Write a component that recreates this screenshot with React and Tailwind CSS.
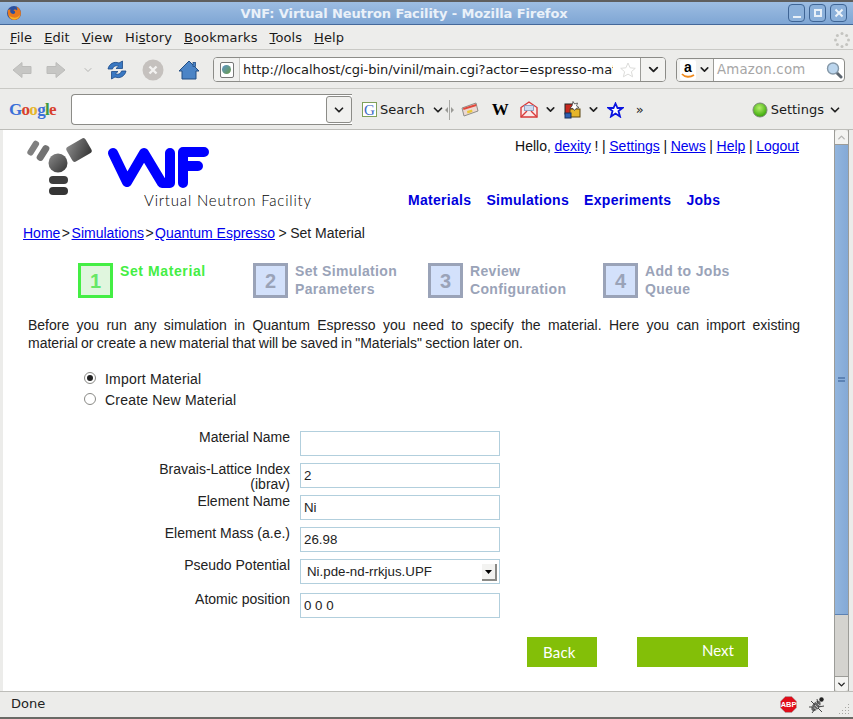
import { ChevronDown } from 'lucide-react';

const ui = { fontFamily: '"DejaVu Sans", sans-serif' };

function FirefoxIcon() {
  return (
    <svg width="16" height="16" viewBox="0 0 16 16">
      <circle cx="8" cy="8" r="7" fill="#2b4f9e" />
      <path d="M2 5C1 9 3 15 8.500 15C13 15 15.500 11 14.800 7C14.300 4 12 2 10 1.500C11.500 3 11.500 4.500 11 5.500C10 4 8 4.500 7.500 5.500C8.500 5.500 9.500 6.500 9 8C8 9.500 5.500 9 4.500 7.500C4 6.500 4 5.500 4.500 4.500C3.500 4.500 2.500 4.500 2 5Z" fill="#e8781e" />
      <path d="M8 14.500C11 14.500 13.500 12.500 14.300 9.500C13 12 10 13 7 12.500C5 12 3.500 11 2.800 10C3.500 12.500 5.500 14.500 8 14.500Z" fill="#f4b62a" />
    </svg>
  );
}

function WindowButton({ children }) {
  return (
    <div className="w-[17px] h-[18px] rounded-[4px] border border-[#3f6595] bg-[#8bb0da] flex items-center justify-center">
      {children}
    </div>
  );
}

function TitleBar() {
  return (
    <div className="h-[25px] shrink-0 relative flex items-center border-t-[2px] border-b border-t-[#5e5e5e] border-b-[#44689a] bg-gradient-to-b from-[#9dbde2] to-[#7fa6d4]" style={ui}>
      <div className="ml-[6px] shrink-0"><FirefoxIcon /></div>
      <div className="flex-1 text-center text-[13px] font-bold text-[#eaf1f9] mt-[1px] -ml-[2px] tracking-[-0.1px]">VNF: Virtual Neutron Facility - Mozilla Firefox</div>
      <div className="flex gap-[4px] mr-[6px]">
        <WindowButton><div className="w-[8px] h-[2px] mt-[7px] bg-[#e8f0f8]" /></WindowButton>
        <WindowButton><div className="w-[8px] h-[8px] border-[2px] border-[#e8f0f8]" /></WindowButton>
        <WindowButton>
          <svg width="10" height="10" viewBox="0 0 10 10"><path d="M1.500 1.500L8.500 8.500M8.500 1.500L1.500 8.500" stroke="#eef4fa" strokeWidth="2" /></svg>
        </WindowButton>
      </div>
    </div>
  );
}

function Throbber() {
  const dots = [[8, 1.500], [12.600, 3.400], [14.500, 8], [12.600, 12.600], [8, 14.500], [3.400, 12.600], [1.500, 8], [3.400, 3.400]];
  return (
    <svg width="16" height="16" viewBox="0 0 16 16">
      {dots.map(([x, y], i) => <circle key={i} cx={x} cy={y} r="1.500" fill="#c4c4c0" />)}
    </svg>
  );
}

function MenuBar() {
  return (
    <div className="h-[25px] shrink-0 flex items-center bg-[#ededeb] border-b border-[#c9c9c5] text-[13px] text-[#1a1a1a] relative" style={ui}>
      <div className="flex items-center pl-[10px] gap-[12px] pt-[1px] tracking-[0.1px]">
        <span><span className="underline">F</span>ile</span>
        <span><span className="underline">E</span>dit</span>
        <span><span className="underline">V</span>iew</span>
        <span>Hi<span className="underline">s</span>tory</span>
        <span><span className="underline">B</span>ookmarks</span>
        <span><span className="underline">T</span>ools</span>
        <span><span className="underline">H</span>elp</span>
      </div>
      <div className="ml-auto mr-[3px] mt-[6px]"><Throbber /></div>
    </div>
  );
}

function ArrowIcon({ flip }) {
  return (
    <svg width="20" height="20" viewBox="0 0 20 20" className={flip ? 'scale-x-[-1]' : ''}>
      <path d="M1 10L10 2.500V6.500H19V13.500H10V17.500Z" fill="#c6c6c4" stroke="#bcbcba" />
    </svg>
  );
}

function ReloadIcon() {
  return (
    <svg width="20" height="20" viewBox="0 0 20 20">
      <path d="M1 9C2 4 7 1 12 3L15.500 1V8.500H9L11.500 6.200C9 5 6 6.500 5.500 9Z" fill="#3a78c2" stroke="#1c4a88" strokeWidth="0.800" />
      <path d="M19 11C18 16 13 19 8 17L4.500 19V11.500H11L8.500 13.800C11 15 14 13.500 14.500 11Z" fill="#3a78c2" stroke="#1c4a88" strokeWidth="0.800" />
    </svg>
  );
}

function StopIcon() {
  return (
    <svg width="22" height="22" viewBox="0 0 22 22">
      <circle cx="11" cy="11" r="10.500" fill="#c5c1be" />
      <path d="M7.500 7.500L14.500 14.500M14.500 7.500L7.500 14.500" stroke="#f3f2f0" strokeWidth="2.400" />
    </svg>
  );
}

function HomeIcon() {
  return (
    <svg width="22" height="20" viewBox="0 0 22 20">
      <path d="M11 1L21 11H18V19H4V11H1Z" fill="#4b84c6" stroke="#234f85" strokeWidth="1" />
      <rect x="15" y="2.500" width="2.500" height="4" fill="#4b84c6" stroke="#234f85" strokeWidth="0.800" />
    </svg>
  );
}

function NavBar() {
  return (
    <div className="h-[39px] shrink-0 flex items-center bg-[#ececea] border-b border-[#c9c9c5] relative pt-[1px]">
      <div className="ml-[12px]"><ArrowIcon /></div>
      <div className="ml-[14px]"><ArrowIcon flip /></div>
      <ChevronDown size={12} strokeWidth={2} className="ml-[16px] text-[#b4b4b2]" />
      <div className="ml-[13px]"><ReloadIcon /></div>
      <div className="ml-[15px]"><StopIcon /></div>
      <div className="ml-[14px]"><HomeIcon /></div>

      <div className="ml-[13px] w-[453px] h-[25px] bg-white border border-[#8c8c88] rounded-[4px] flex items-center overflow-hidden">
        <div className="w-[26px] h-full shrink-0 flex items-center justify-center bg-[#f1f1ef] border-r border-[#c9c9c5]">
          <div className="w-[14px] h-[16px] bg-white border border-[#777] rounded-[2px] flex items-center justify-center">
            <div className="w-[9px] h-[9px] rounded-full bg-gradient-to-br from-[#5d92c8] to-[#6d9a3d]" />
          </div>
        </div>
        <div className="w-[370px] ml-[3px] text-[13px] text-[#1a1a1a] whitespace-nowrap overflow-hidden shrink-0 tracking-[-0.05px]" style={ui}>
          http://localhost/cgi-bin/vinil/main.cgi?actor=espresso-material
        </div>
        <svg width="16" height="16" viewBox="0 0 16 16" className="ml-[7px] shrink-0">
          <path d="M8 1L10.100 5.800L15.300 6.300L11.400 9.700L12.600 14.800L8 12.100L3.400 14.800L4.600 9.700L.7 6.300L5.900 5.800Z" fill="#fff" stroke="#dcdcda" strokeWidth="1" />
        </svg>
        <div className="ml-auto w-[25px] h-full border-l border-[#9c9c98] bg-[#f3f3f1] flex items-center justify-center shrink-0">
          <ChevronDown size={15} strokeWidth={3} className="text-[#222]" />
        </div>
      </div>

      <div className="ml-[10px] w-[169px] h-[24px] bg-white border border-[#8c8c88] rounded-[4px] flex items-center overflow-hidden">
        <div className="w-[37px] h-full shrink-0 flex items-center bg-[#f1f1ef] border-r border-[#9c9c98] pl-[3px]">
          <div className="w-[16px] h-[20px] bg-white rounded-[2px] flex flex-col items-center leading-[14px] text-[14px] font-bold text-black relative" style={{ fontFamily: '"Liberation Sans", sans-serif' }}>
            a
            <svg width="14" height="6" viewBox="0 0 14 6" className="absolute bottom-[1px] left-[1px]"><path d="M1 1C4 4.500 9 4.500 13 2" stroke="#f08a1d" strokeWidth="1.800" fill="none" /></svg>
          </div>
          <ChevronDown size={13} strokeWidth={3} className="text-[#222] ml-[2px]" />
        </div>
        <span className="ml-[3px] text-[13.300px] text-[#a6a6a6] tracking-[0.2px]" style={ui}>Amazon.com</span>
        <svg width="17" height="18" viewBox="0 0 17 18" className="ml-auto mr-[1px]">
          <path d="M10.500 11.500L15 16" stroke="#5c6670" strokeWidth="3" strokeLinecap="round" />
          <circle cx="7" cy="7.500" r="5.500" fill="#bcd6ee" stroke="#8598a8" strokeWidth="1.400" />
        </svg>
      </div>
    </div>
  );
}

function GoogleBar() {
  return (
    <div className="h-[41px] shrink-0 flex items-center bg-[#ececea] border-b border-[#bdbdb9] text-[13px] text-[#1a1a1a] pt-[1px]" style={ui}>
      <div className="ml-[9px] w-[48px] text-[17px] leading-none tracking-[-0.7px] font-bold" style={{ fontFamily: '"Liberation Serif", serif' }}>
        <span className="text-[#3a6fd8]">G</span><span className="text-[#d8402c]">o</span><span className="text-[#e6b52c]">o</span><span className="text-[#3a6fd8]">g</span><span className="text-[#3f9a3f]">l</span><span className="text-[#d8402c]">e</span>
      </div>
      <div className="ml-[14px] w-[281px] h-[31px] bg-white border border-[#8c8c88] border-r-0 rounded-l-[4px] flex justify-end shrink-0 items-center">
        <div className="w-[26px] h-[27px] bg-[#f1f1ef] border border-[#8c8c88] rounded-[3px] flex items-center justify-center">
          <ChevronDown size={14} strokeWidth={3} className="text-[#222]" />
        </div>
      </div>
      <div className="ml-[10px] w-[15px] h-[15px] border border-[#7fa05a] bg-white text-[15px] leading-[14px] text-center text-[#3d69c8]" style={{ fontFamily: '"Liberation Serif", serif' }}>G</div>
      <span className="ml-[3px]">Search</span>
      <ChevronDown size={14} strokeWidth={3} className="ml-[6px] text-[#222]" />
      <div className="relative w-[8px] h-[20px] ml-[1px] flex items-center justify-center">
        <div className="w-[1px] h-full bg-[#a8a8a4]" />
        <svg width="9" height="6" viewBox="0 0 9 6" className="absolute"><path d="M0 3L3 0V6ZM9 3L6 0V6Z" fill="#9a9a96" /></svg>
      </div>
      <svg width="18" height="16" viewBox="0 0 18 16" className="ml-[7px]">
        <path d="M1 6L15 1L17 9L3 14Z" fill="#ecd8d2" stroke="#8e8e8a" />
        <path d="M2 6L15 2L15.500 4L2.500 8Z" fill="#e0483c" />
        <path d="M6 9L11 7.500L11.500 10L6.500 11.500Z" fill="#e9c83a" />
      </svg>
      <span className="ml-[13px] text-[17px] font-bold text-black leading-none" style={{ fontFamily: '"Liberation Serif", serif' }}>W</span>
      <svg width="18" height="17" viewBox="0 0 18 17" className="ml-[11px]">
        <path d="M1 6.500L9 1L17 6.500V16H1Z" fill="#fbeaea" stroke="#d83a3a" strokeWidth="1.400" />
        <path d="M1 16L7 10M17 16L11 10" stroke="#d83a3a" strokeWidth="1.400" />
        <rect x="4.500" y="4.500" width="9" height="5" fill="#cfdcf0" stroke="#7d93b8" strokeWidth="0.800" />
      </svg>
      <ChevronDown size={13} strokeWidth={3} className="ml-[6px] text-[#222]" />
      <svg width="18" height="18" viewBox="0 0 18 18" className="ml-[7px]">
        <rect x="1" y="3" width="9" height="10" fill="#c8281e" stroke="#222" />
        <rect x="6" y="8" width="10" height="8" fill="#e5b52a" stroke="#5a4410" />
        <rect x="1" y="12" width="6" height="5" fill="#2e5fb0" stroke="#16305c" />
        <path d="M9 0.500L10.500 3L13.500 2L12.500 5L15 6.500L12 7.500L10.500 9.500L9 7.500L6 7L8 5Z" fill="#fff" stroke="#333" strokeWidth="0.700" />
      </svg>
      <ChevronDown size={13} strokeWidth={3} className="ml-[5px] text-[#222]" />
      <svg width="17" height="16" viewBox="0 0 17 16" className="ml-[7px]">
        <path d="M8.500 1.500L10.500 6H15.500L11.500 9L13 14.500L8.500 11.500L4 14.500L5.500 9L1.500 6H6.500Z" fill="#fff" stroke="#0a14e0" strokeWidth="1.800" />
      </svg>
      <span className="ml-[12px] text-[13px] text-[#222] leading-none">»</span>
      <svg width="16" height="16" viewBox="0 0 16 16" className="ml-auto">
        <defs>
          <radialGradient id="led" cx="45%" cy="35%" r="65%">
            <stop offset="0%" stopColor="#b4f06a" />
            <stop offset="100%" stopColor="#35a505" />
          </radialGradient>
        </defs>
        <circle cx="8" cy="8" r="7" fill="url(#led)" stroke="#7d8a78" />
      </svg>
      <span className="ml-[3px]">Settings</span>
      <ChevronDown size={14} strokeWidth={3} className="ml-[4px] mr-[11px] text-[#222]" />
    </div>
  );
}

// coordinates are the page's own, so the viewBox starts where the svg sits
function VnfLogo() {
  return (
    <svg width="190" height="66" viewBox="23 135 190 66" className="block">
      <defs>
        <linearGradient id="metal" x1="0" y1="0" x2="1" y2="1">
          <stop offset="0%" stopColor="#8a8a8a" />
          <stop offset="100%" stopColor="#333" />
        </linearGradient>
      </defs>
      <rect x="-8" y="-3" width="16" height="6.500" rx="3" transform="translate(33 148) rotate(-58)" fill="#808080" />
      <rect x="-8.500" y="-3.500" width="17" height="7" rx="3" transform="translate(43 153) rotate(-58)" fill="#737373" />
      <rect x="-11" y="-8.500" width="22" height="17" rx="3" transform="translate(79 150) rotate(-30)" fill="url(#metal)" />
      <circle cx="58" cy="163" r="9.500" fill="url(#metal)" />
      <rect x="49" y="176" width="19" height="8" rx="4" fill="#3e3e3e" />
      <rect x="49" y="187" width="19" height="8" rx="4" fill="#353535" />
      <path d="M113 153L127 182L144 153L162 183L170 183V153M183 183V152H204M183 166H198" fill="none" stroke="#0000ff" strokeWidth="10" strokeLinecap="round" strokeLinejoin="round" />
    </svg>
  );
}

function PageHeader() {
  return (
    <div className="flex h-[94px] shrink-0 relative">
      <div className="ml-[20px] mt-[5px] w-[300px]">
        <VnfLogo />
        <div className="absolute left-[141px] top-[61px] text-[15px] leading-[18px] text-black whitespace-nowrap tracking-[0.8px] font-light" style={{ fontFamily: 'Lato, sans-serif' }}>Virtual Neutron Facility</div>
      </div>
      <div className="flex-1 flex flex-col">
        <div className="text-[14px] text-[#111] text-right pr-[35px] pt-[8px] leading-[17px] [word-spacing:-0.3px]">
          Hello, <a className="text-[#0000ee] underline">dexity</a> ! | <a className="text-[#0000ee] underline">Settings</a> | <a className="text-[#0000ee] underline">News</a> | <a className="text-[#0000ee] underline">Help</a> | <a className="text-[#0000ee] underline">Logout</a>
        </div>
        <div className="flex gap-[15px] ml-[85px] mt-[36px] text-[14px] leading-[18px] font-bold text-[#0000dd] tracking-[0.3px]">
          <span>Materials</span><span>Simulations</span><span>Experiments</span><span>Jobs</span>
        </div>
      </div>
    </div>
  );
}

function Step({ n, title, second, active }) {
  return (
    <div className="w-[175px] flex shrink-0">
      <div className={`w-[35px] h-[35px] border-[3px] flex items-center justify-center text-[20px] font-bold ${active ? 'border-[#44ee44] bg-[#e0f6de] text-[#66e766]' : 'border-[#9aa3b8] bg-[#d3e1fb] text-[#9aa3b8]'}`}>{n}</div>
      <div className={`ml-[7px] text-[14px] leading-[18px] font-bold -mt-[1px] ${active ? 'text-[#44ee44] tracking-[0.6px]' : 'text-[#9aa3b8] tracking-[0.35px]'}`}>
        {title}{second && <><br />{second}</>}
      </div>
    </div>
  );
}

function Radio({ checked, label }) {
  return (
    <div className="flex items-center h-[21px] text-[14px] text-[#222] tracking-[0.2px]">
      <div className="w-[12px] h-[12px] rounded-full border border-[#8a8a86] bg-white flex items-center justify-center -mt-[3px]">
        {checked && <div className="w-[6px] h-[6px] rounded-full bg-[#222]" />}
      </div>
      <span className="ml-[9px]">{label}</span>
    </div>
  );
}

function FormRow({ label, value, select, height }) {
  return (
    <div className={`flex ${height}`}>
      <div className="w-[272px] text-right text-[14px] leading-[15px] text-[#222] -mt-[1px]">{label}</div>
      <div className={`ml-[10px] w-[200px] h-[25px] border border-[#b2cfdd] bg-white flex items-center text-[13.300px] text-[#222] pt-[1px] ${select ? 'pl-[6px]' : 'pl-[3px]'}`}>
        {value}
        {select && (
          <div className="ml-auto mr-[2px] w-[15px] h-[17px] mt-[1px] bg-[#f3f3f1] border-r-[2px] border-b-[2px] border-[#8a8a86] flex items-center justify-center">
            <svg width="7" height="4" viewBox="0 0 7 4"><path d="M0 0H7L3.500 4Z" fill="#000" /></svg>
          </div>
        )}
      </div>
    </div>
  );
}

function Scrollbar() {
  return (
    <div className="w-[15px] shrink-0 bg-[#d4d3cf] flex flex-col border-x border-[#9c9c98]">
      <div className="h-[15px] bg-[#f3f3f1] border-b border-[#9c9c98] rounded-t-[3px] flex items-center justify-center shrink-0">
        <ChevronDown size={11} strokeWidth={3} className="rotate-180 text-[#b4b4b2]" />
      </div>
      <div className="h-[470px] bg-gradient-to-r from-[#92b5de] to-[#84a9d6] border-b border-[#5c82b4] flex items-center justify-center shrink-0">
        <div className="w-[7px] h-[5px] border-y-[2px] border-[#5c82b4]" />
      </div>
      <div className="mt-auto h-[15px] bg-[#f3f3f1] border-t border-[#9c9c98] rounded-b-[3px] flex items-center justify-center shrink-0">
        <ChevronDown size={11} strokeWidth={3} className="text-[#222]" />
      </div>
    </div>
  );
}

function StatusBar() {
  return (
    <div className="h-[28px] shrink-0 flex items-center bg-[#ececea] border-t border-b-[2px] border-t-[#bdbdb9] border-b-[#6a6a66] text-[13px] text-[#222]" style={ui}>
      <span className="ml-[11px] -mt-[1px]">Done</span>
      <svg width="17" height="17" viewBox="0 0 16 16" className="ml-auto">
        <path d="M5 0.500H11L15.500 5V11L11 15.500H5L0.500 11V5Z" fill="#e00d1a" stroke="#a8a8a8" strokeWidth="0.600" />
        <text x="8" y="10.500" textAnchor="middle" fontSize="7" fontWeight="700" fill="#fff" fontFamily="Liberation Sans, sans-serif">ABP</text>
      </svg>
      <svg width="17" height="17" viewBox="0 0 17 17" className="ml-[12px]">
        <ellipse cx="7" cy="10" rx="3.500" ry="6" transform="rotate(40 7 10)" fill="#666" />
        <path d="M4 7L10 13M3 10L8 14M6 5L12 11" stroke="#ddd" strokeWidth="0.700" />
        <path d="M2 5L6 9M0 11L5 11M3 17L6 13M8 3L9 8M15 10L9 11M13 16L9 12" stroke="#444" strokeWidth="1" />
        <circle cx="12.500" cy="3.500" r="2.200" fill="#222" />
      </svg>
      <svg width="12" height="12" viewBox="0 0 12 12" className="ml-[12px] mr-[3px] mt-[6px]">
        {[[10, 2], [7, 5], [10, 5], [4, 8], [7, 8], [10, 8], [1, 11], [4, 11], [7, 11], [10, 11]].map(([x, y], i) => (
          <rect key={i} x={x} y={y} width="1" height="1" fill="#a6a6a2" />
        ))}
      </svg>
    </div>
  );
}

export default function App() {
  const link = 'text-[#0000ee] underline';
  return (
    <div className="w-[853px] h-[719px] flex flex-col overflow-hidden bg-[#ececea]" style={{ fontFamily: '"Liberation Sans", Arial, sans-serif' }}>
      <TitleBar />
      <MenuBar />
      <NavBar />
      <GoogleBar />

      <div className="flex-1 min-h-0 flex pl-[3px] pr-[4px]">
        <div className="flex-1 min-w-0 bg-white overflow-hidden flex flex-col">
          <PageHeader />

          <div className="ml-[20px] mt-[1px] text-[14px] leading-[17px] text-[#222] flex">
            <a className={link}>Home</a>
            <span className="mx-[1.500px]">&gt;</span>
            <a className={link}>Simulations</a>
            <span className="mx-[1.500px]">&gt;</span>
            <a className={link}>Quantum Espresso</a>
            <span className="mx-[3.500px]">&gt;</span>
            <span>Set Material</span>
          </div>

          <div className="flex ml-[75px] mt-[21px]">
            <Step n="1" title="Set Material" active />
            <Step n="2" title="Set Simulation" second="Parameters" />
            <Step n="3" title="Review" second="Configuration" />
            <Step n="4" title="Add to Jobs" second="Queue" />
          </div>

          <div className="ml-[25px] w-[772px] mt-[18px] text-[14px] leading-[18px] text-[#222]">
            <div className="text-justify [text-align-last:justify] whitespace-nowrap">Before you run any simulation in Quantum Espresso you need to specify the material. Here you can import existing</div>
            <div className="[word-spacing:-0.6px]">material or create a new material that will be saved in "Materials" section later on.</div>
          </div>

          <div className="ml-[81px] mt-[17px]">
            <Radio checked label="Import Material" />
            <Radio label="Create New Material" />
          </div>

          <div className="ml-[15px] mt-[20px] flex flex-col">
            <FormRow label="Material Name" height="h-[32px]" />
            <FormRow label={<>Bravais-Lattice Index<br />(ibrav)</>} value="2" height="h-[32px]" />
            <FormRow label="Element Name" value="Ni" height="h-[32px]" />
            <FormRow label="Element Mass (a.e.)" value="26.98" height="h-[32px]" />
            <FormRow label="Pseudo Potential" value="Ni.pde-nd-rrkjus.UPF" select height="h-[34px]" />
            <FormRow label="Atomic position" value="0 0 0" height="h-[25px]" />
          </div>

          <div className="flex ml-[524px] mt-[19px] gap-[40px] text-[15px] text-white" style={{ fontFamily: 'Lato, sans-serif' }}>
            <div className="w-[70px] h-[30px] bg-[#83bf08] pl-[16px] leading-[30px] tracking-[0.2px]">Back</div>
            <div className="w-[111px] h-[30px] bg-[#83bf08] pl-[65px] leading-[27px]">Next</div>
          </div>
        </div>
        <Scrollbar />
      </div>

      <StatusBar />
    </div>
  );
}
